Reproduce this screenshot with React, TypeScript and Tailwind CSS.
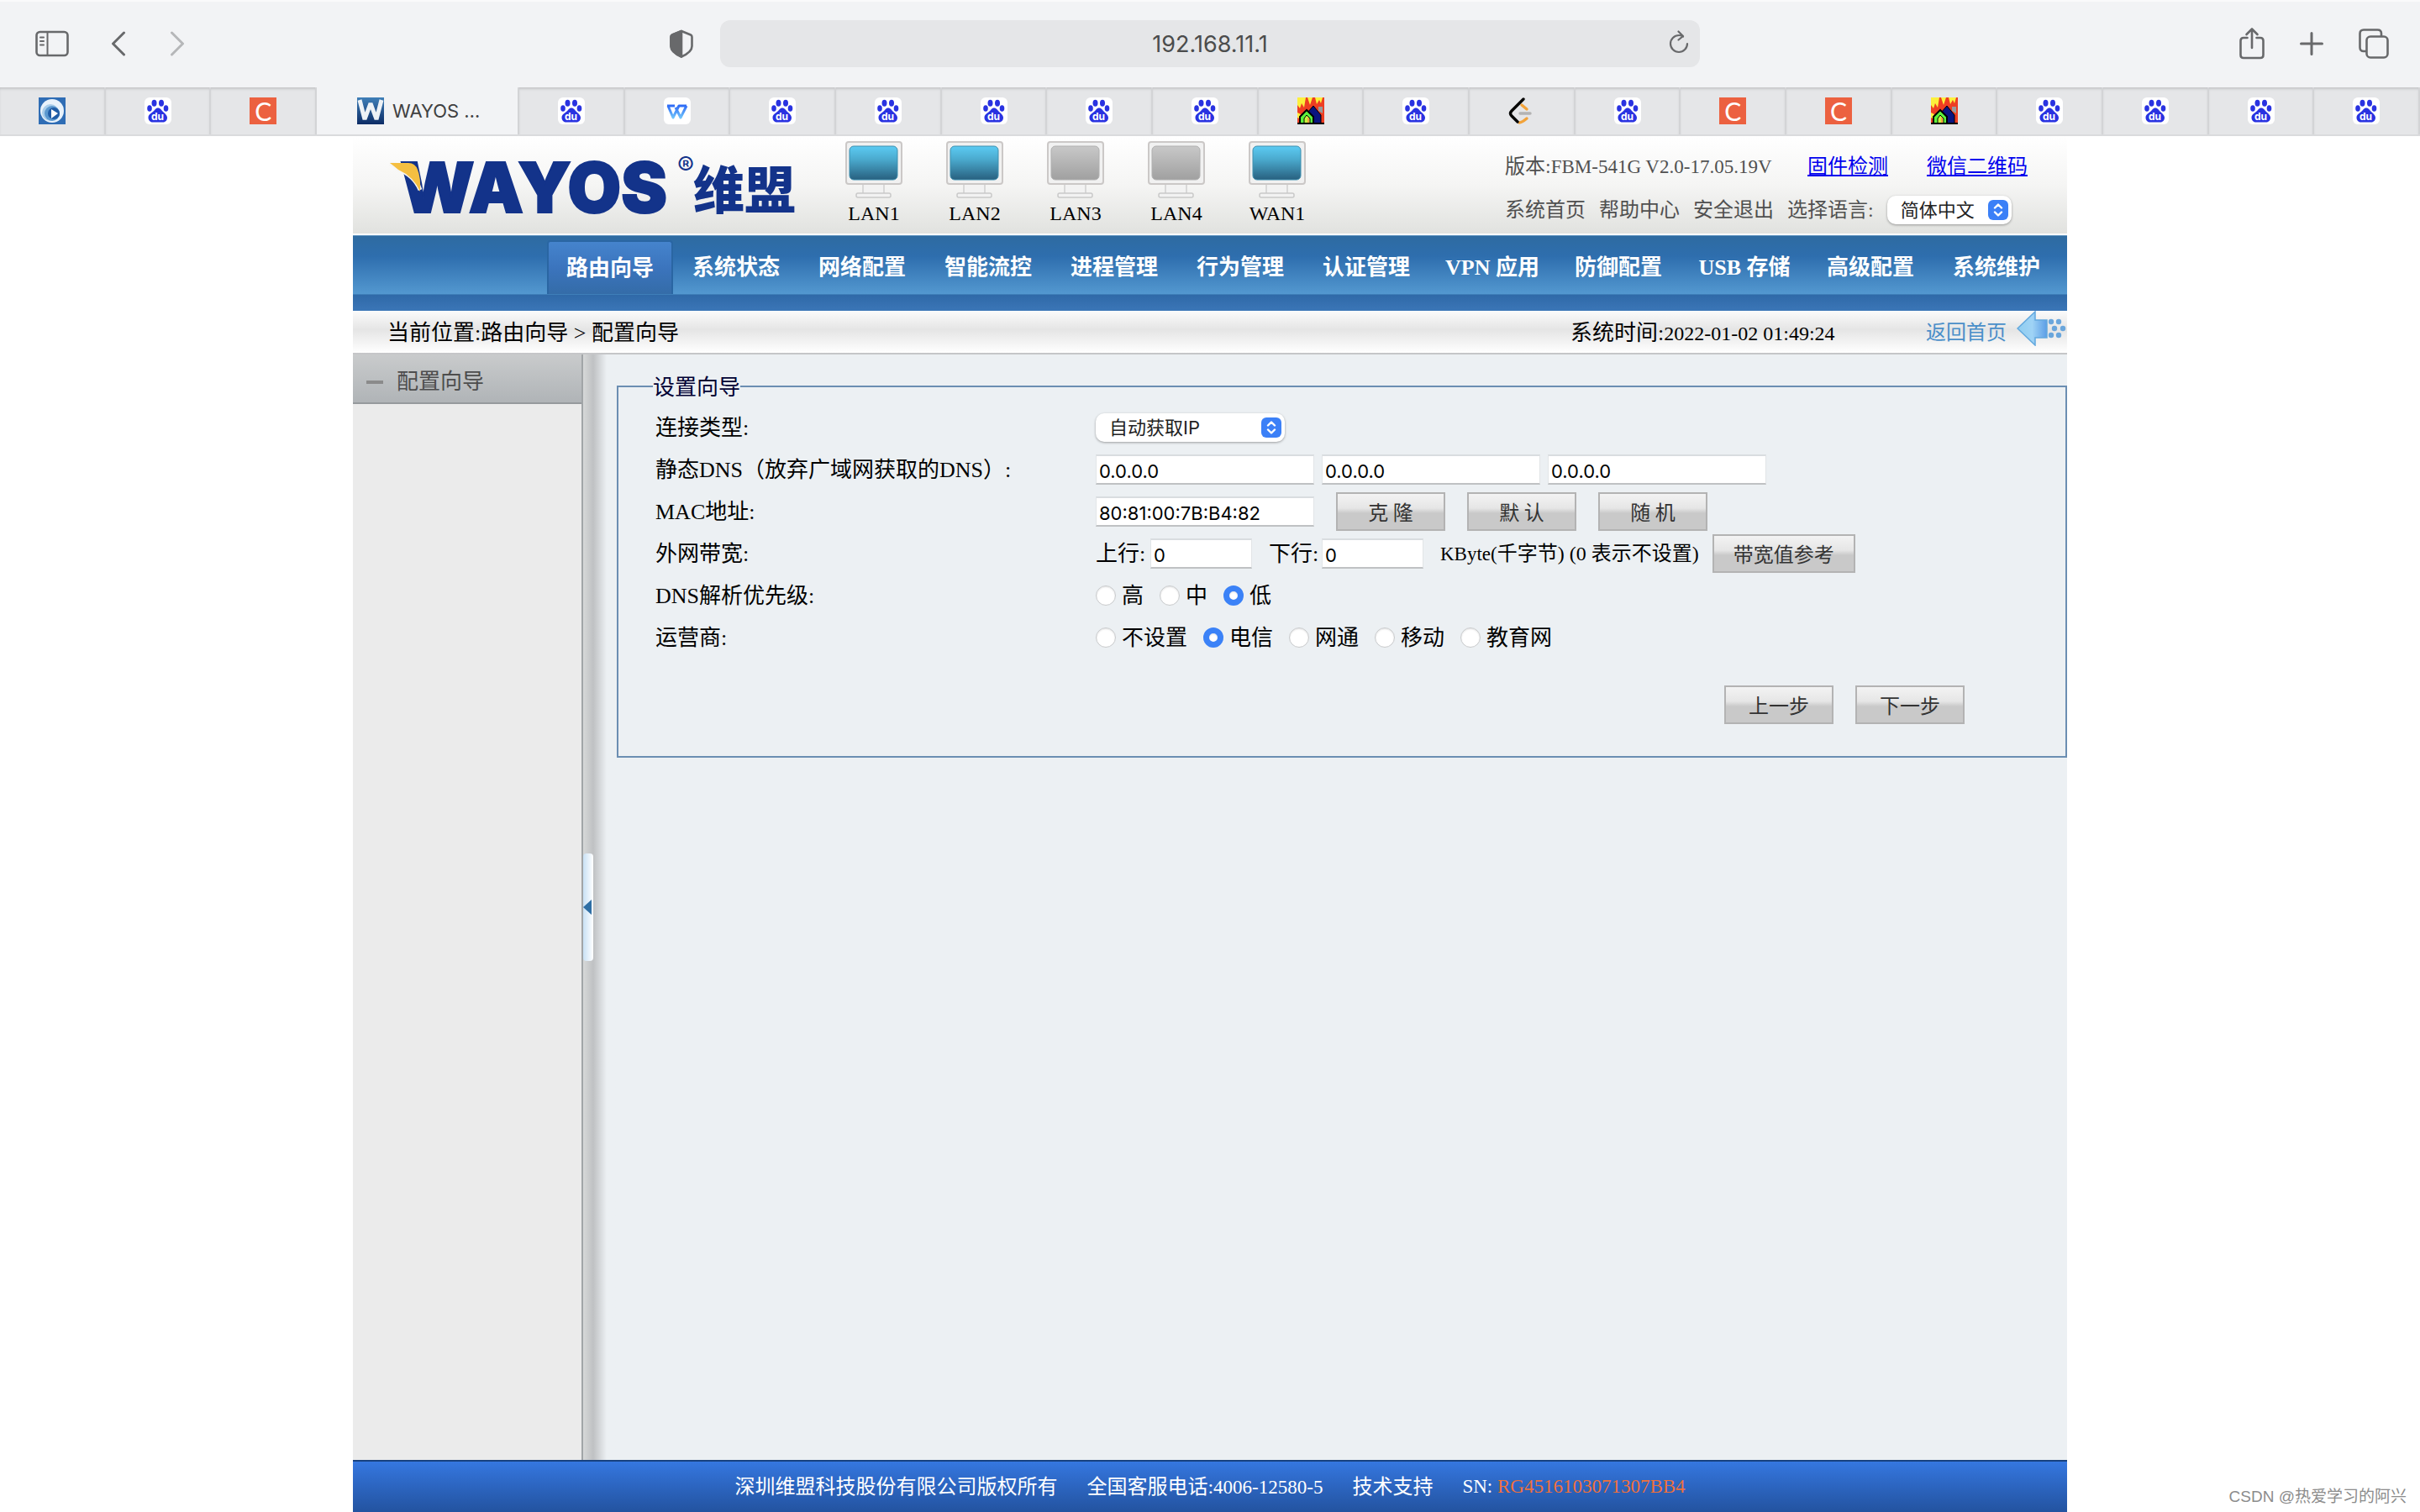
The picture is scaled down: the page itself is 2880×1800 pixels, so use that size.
import React from 'react';

type FaviconKind = 'play' | 'baidu' | 'csdn' | 'wayos' | 'wps' | 'house' | 'leetcode';

const tabsBefore: FaviconKind[] = ['play', 'baidu', 'csdn'];
const tabsAfter: FaviconKind[] = [
    'baidu', 'wps', 'baidu', 'baidu', 'baidu', 'baidu', 'baidu', 'house', 'baidu',
    'leetcode', 'baidu', 'csdn', 'csdn', 'house', 'baidu', 'baidu', 'baidu', 'baidu',
];

const ports = [
    { name: 'LAN1', up: true },
    { name: 'LAN2', up: true },
    { name: 'LAN3', up: false },
    { name: 'LAN4', up: false },
    { name: 'WAN1', up: true },
];

const menu = [
    '路由向导', '系统状态', '网络配置', '智能流控', '进程管理', '行为管理',
    '认证管理', 'VPN 应用', '防御配置', 'USB 存储', '高级配置', '系统维护',
];

const Favicon: React.FC<{ kind: FaviconKind }> = ({ kind }) => {
    switch (kind) {
        case 'baidu':
            return (
                <svg viewBox="0 0 32 32" className="size-8 shrink-0" fill="#2932e1">
                    <rect width="32" height="32" rx="6" fill="#fff" />
                    <ellipse cx="11.500" cy="6.700" rx="3" ry="4" />
                    <ellipse cx="20" cy="6.700" rx="3" ry="4" />
                    <ellipse cx="6" cy="13" rx="2.800" ry="3.800" />
                    <ellipse cx="25.500" cy="13" rx="2.800" ry="3.800" />
                    <path d="M16 12.500c3 0 4 2.500 6 4.500s5 4 5 7-2 5.500-5 5.500H10c-3 0-5.500-2-5.500-5.500s3-5 5.500-7 3-4.500 6-4.500z" />
                    <text x="15.500" y="27" fontFamily="Inter, sans-serif" fontWeight="700" fontSize="12" textAnchor="middle" fill="#fff">
                        du
                    </text>
                </svg>
            );
        case 'csdn':
            return (
                <span className="flex size-8 shrink-0 items-center justify-center bg-[#ec6140] font-['Lato',sans-serif] text-[30px] leading-8 text-white">
                    C
                </span>
            );
        case 'play':
            return (
                <svg viewBox="0 0 32 32" className="size-8 shrink-0">
                    <rect width="32" height="32" fill="#2f6db5" />
                    <circle cx="16" cy="16" r="14" fill="#e8f2fb" />
                    <circle cx="14" cy="18" r="10" fill="#a9cdea" />
                    <circle cx="16" cy="19" r="9" fill="#5b98cf" />
                    <circle cx="18" cy="19" r="7" fill="#1f5ca6" />
                    <path d="M15 14l8 5-8 6z" fill="#fff" />
                </svg>
            );
        case 'wayos':
            return (
                <svg viewBox="0 0 32 32" className="size-8 shrink-0">
                    <defs>
                        <linearGradient id="wfav" x1="0" y1="0" x2="0" y2="1">
                            <stop offset="0" stopColor="#3f7fb8" />
                            <stop offset="1" stopColor="#0d2c66" />
                        </linearGradient>
                    </defs>
                    <rect width="32" height="32" fill="url(#wfav)" />
                    <path d="M3 3l6 23 7-19 7 19 6-23" fill="none" stroke="#eef2f6" strokeWidth="5" strokeLinejoin="bevel" />
                </svg>
            );
        case 'wps':
            return (
                <svg viewBox="0 0 32 32" className="size-8 shrink-0">
                    <defs>
                        <linearGradient id="wps" x1="0" y1="0" x2="0" y2="1">
                            <stop offset="0" stopColor="#2f6cf6" />
                            <stop offset="1" stopColor="#6fc3fb" />
                        </linearGradient>
                    </defs>
                    <rect width="32" height="32" rx="6" fill="#fff" />
                    <path d="M4 10h9M5 10l6 14 7-14h9M14 12l6 12 7-14" fill="none" stroke="url(#wps)" strokeWidth="3" strokeLinejoin="round" />
                </svg>
            );
        case 'house':
            return (
                <svg viewBox="0 0 32 32" className="size-8 shrink-0">
                    <rect width="32" height="32" fill="#ee3d22" />
                    <path d="M0 0h10l-2 12-3-5-2 6-3-4zM12 0h6l-3 9zM21 0h9l-2 7-2-4-3 5zM0 18l4 2-2 5-2-1z" fill="#fcf03c" />
                    <path d="M25 11h5v8l-5-3z" fill="#9a9a9a" />
                    <path d="M12 32V18l7-8 9 11v11z" fill="#0a1480" stroke="#000" strokeWidth="1" />
                    <path d="M3 32V23l8-8 8 8v9z" fill="#5df23c" stroke="#000" strokeWidth="2" />
                    <path d="M8 32v-7l3-4 4 4v7z" fill="#c6f53c" stroke="#000" strokeWidth="1" />
                    <path d="M12 24h2v8h-2z" fill="#f5a33c" />
                    <path d="M0 31h32" stroke="#000" strokeWidth="2" />
                </svg>
            );
        case 'leetcode':
            return (
                <svg viewBox="0 0 32 32" className="size-8 shrink-0" fill="none" strokeWidth="3.4" strokeLinecap="round">
                    <path d="M16 9l6 5M13 30q3 0 9-5" stroke="#f2a33a" />
                    <path d="M14 19h12" stroke="#b3b3b3" />
                    <path d="M18 2L4 16q-3 3 0 6l7 7" stroke="#070706" />
                </svg>
            );
    }
};

const Tab: React.FC<{ kind: FaviconKind }> = ({ kind }) => (
    <button
        type="button"
        aria-label={kind}
        className="flex h-full flex-1 items-center justify-center border-r-2 border-[#d3d4d6] bg-[#e5e6e8] shadow-[inset_0_3px_3px_-1px_#c4c5c7]"
    >
        <Favicon kind={kind} />
    </button>
);

const BrowserChrome: React.FC = () => (
    <div className="font-['Inter',sans-serif] text-[#68696b]">
        <div className="grid h-[104px] grid-cols-[1fr_1166px_1fr] items-center bg-[#f2f3f5] shadow-[inset_0_2px_0_#fafafb]">
            <div className="flex items-center pr-8 pl-[42px]">
                <button type="button" aria-label="Sidebar">
                    <svg viewBox="0 0 40 32" className="h-8 w-10" fill="none" stroke="currentColor" strokeWidth="2.6" strokeLinecap="round">
                        <rect x="1.5" y="2" width="37" height="28" rx="4" />
                        <path d="M14.5 2v28M6 8.500h4M6 13h4M6 17.500h4" strokeWidth="2" />
                    </svg>
                </button>
                <button type="button" aria-label="Back" className="ml-[50px]">
                    <svg viewBox="0 0 18 30" className="h-[30px] w-[18px]" fill="none" stroke="currentColor" strokeWidth="3" strokeLinecap="round" strokeLinejoin="round">
                        <path d="M15.500 2L2.500 15l13 13" />
                    </svg>
                </button>
                <button type="button" aria-label="Forward" className="ml-[52px] text-[#b6b7b9]">
                    <svg viewBox="0 0 18 30" className="h-[30px] w-[18px]" fill="none" stroke="currentColor" strokeWidth="3" strokeLinecap="round" strokeLinejoin="round">
                        <path d="M2.500 2l13 13-13 13" />
                    </svg>
                </button>
                <button type="button" aria-label="Privacy report" className="ml-auto">
                    <svg viewBox="0 0 28 34" className="h-[34px] w-7" fill="none" stroke="currentColor" strokeWidth="2.600" strokeLinejoin="round">
                        <path d="M14 2l11 4.500q1.500.7 1.500 2.500v11q0 7-12.500 12.500Q1.500 27 1.500 20V9q0-1.800 1.500-2.500z" />
                        <path d="M14 2L3 6.500Q1.500 7.200 1.500 9v11q0 7 12.500 12.500z" fill="currentColor" />
                    </svg>
                </button>
            </div>
            <div className="relative h-14">
                <input
                    aria-label="Address"
                    defaultValue="192.168.11.1"
                    className="h-full w-full rounded-xl bg-[#e5e6e8] text-center text-[27px] text-[#4b4c4c] outline-none"
                />
                <button type="button" aria-label="Reload" className="absolute top-3 right-3">
                    <svg viewBox="0 0 26 30" className="h-[30px] w-[26px]" fill="none" stroke="currentColor" strokeWidth="2.200" strokeLinecap="round" strokeLinejoin="round">
                        <path d="M18 7.500q-2-1.500-5-1.500a10 10 0 1 0 10 10M12.500 1.500l5.500 5.500-5.500 4.500" />
                    </svg>
                </button>
            </div>
            <div className="flex items-center justify-end gap-[42px] pr-[37px]">
                <button type="button" aria-label="Share">
                    <svg viewBox="0 0 30 40" className="h-10 w-[30px]" fill="none" stroke="currentColor" strokeWidth="2.600" strokeLinecap="round" strokeLinejoin="round">
                        <path d="M9.500 13H5q-3.500 0-3.500 3.500v17Q1.500 37 5 37h20q3.500 0 3.500-3.500v-17Q28.500 13 25 13h-4.500M15 25V2.500M8.500 9L15 2.500 21.500 9" />
                    </svg>
                </button>
                <button type="button" aria-label="New tab">
                    <svg viewBox="0 0 28 28" className="size-7" stroke="currentColor" strokeWidth="3" strokeLinecap="round">
                        <path d="M14 1.500v25M1.500 14h25" />
                    </svg>
                </button>
                <button type="button" aria-label="Tab overview">
                    <svg viewBox="0 0 36 36" className="size-9" fill="none" stroke="currentColor" strokeWidth="2.600" strokeLinejoin="round">
                        <rect x="9.500" y="9.500" width="25" height="25" rx="4.500" />
                        <path d="M9 27H6q-4.500 0-4.500-4.500V6Q1.500 1.500 6 1.500h16.500Q27 1.500 27 6v3" />
                    </svg>
                </button>
            </div>
        </div>
        <div className="flex h-[58px] border-b-2 border-[#dadbdd] bg-[#f2f3f5]">
            {tabsBefore.map((kind, i) => (
                <Tab key={i} kind={kind} />
            ))}
            <button type="button" className="flex w-[241px] items-center gap-[10px] border-r-2 border-[#d3d4d6] pl-12 text-[22px] text-[#3f4041]">
                <Favicon kind="wayos" />
                WAYOS …
            </button>
            {tabsAfter.map((kind, i) => (
                <Tab key={i} kind={kind} />
            ))}
        </div>
    </div>
);

const Logo: React.FC = () => (
    <svg viewBox="0 0 486 116" className="h-[116px] w-[486px]" role="img" aria-label="WAYOS 维盟" fill="#13338a">
        <text x="14" y="91" fontFamily="Inter, sans-serif" fontWeight="900" fontSize="82" stroke="#13338a" strokeWidth="2">
            WAYOS
        </text>
        <text x="344" y="46" fontFamily="Inter, sans-serif" fontSize="30">
            ®
        </text>
        <text x="363" y="87" fontFamily="'Noto Sans CJK SC', sans-serif" fontWeight="900" fontSize="61">
            维盟
        </text>
        <path d="M2 33q25 1 36 31Q30 46 12 40q-4-5-10-7z" fill="#f6f6f5" stroke="#f6f6f5" strokeWidth="5" />
        <path d="M2 32h22q8 0 11 8 4 10 3 26Q30 48 12 40 6 35 2 32z" fill="#f5bf41" />
    </svg>
);

const Monitor: React.FC<{ up: boolean }> = ({ up }) => (
    <svg viewBox="0 0 68 68" className="size-[68px]">
        <defs>
            <linearGradient id="screenUp" x1="0" y1="0" x2="0" y2="1">
                <stop offset="0" stopColor="#5ccbf3" />
                <stop offset="0.400" stopColor="#4aa9cd" />
                <stop offset="1" stopColor="#28607f" />
            </linearGradient>
            <linearGradient id="screenDown" x1="0" y1="0" x2="0" y2="1">
                <stop offset="0" stopColor="#c8c8c8" />
                <stop offset="1" stopColor="#a0a0a0" />
            </linearGradient>
        </defs>
        <rect x="21" y="50" width="25" height="13" fill="#f2f2f2" stroke="#cfcfcf" strokeWidth="1.500" />
        <rect x="13" y="62" width="41" height="5" rx="2" fill="#f2f2f2" stroke="#c9c9c9" strokeWidth="1.500" />
        <rect x="1" y="1" width="66" height="50" rx="3" fill="#f1f1f1" stroke="#cbc8c7" strokeWidth="2" />
        <rect x="5" y="6" width="57" height="40" rx="5" fill={up ? 'url(#screenUp)' : 'url(#screenDown)'} stroke={up ? '#3f8fae' : '#b0b0b0'} strokeWidth="1" />
    </svg>
);

const PopupSelect: React.FC<{ id: string; options: string[]; className: string }> = ({ id, options, className }) => (
    <span className={`relative inline-flex h-[34px] items-center ${className}`}>
        <select
            id={id}
            className="h-full w-full appearance-none rounded-[10px] bg-white pl-4 font-['Inter','Noto_Sans_CJK_SC',sans-serif] text-[22px] leading-8 text-[#222] shadow-[0_1px_3px_rgba(0,0,0,0.35)] outline-none"
        >
            {options.map((o) => (
                <option key={o}>{o}</option>
            ))}
        </select>
        <svg viewBox="0 0 24 24" className="pointer-events-none absolute right-1 size-6">
            <rect width="24" height="24" rx="6" fill="#3b80f7" />
            <path d="M8 9.500l4-4 4 4M8 14.500l4 4 4-4" fill="none" stroke="#fff" strokeWidth="2.400" strokeLinecap="round" strokeLinejoin="round" />
        </svg>
    </span>
);

const Header: React.FC = () => (
    <header className="flex h-[116px] bg-linear-to-b from-white via-[#f5f5f4] to-[#e1e2df] pl-[42px] text-2xl">
        <Logo />
        <div className="ml-8 flex pt-[6px]">
            {ports.map((p) => (
                <div key={p.name} className="flex w-[120px] flex-col items-center gap-1">
                    <Monitor up={p.up} />
                    <span className="leading-7">{p.name}</span>
                </div>
            ))}
        </div>
        <div className="ml-auto w-[669px] pt-[10px] text-[#505050]">
            <div className="flex h-[52px] items-center">
                <span className="w-[360px]">
                    版本:<span className="text-[23px]">FBM-541G V2.0-17.05.19V</span>
                </span>
                <a href="#firmware" className="text-[#0000ee] underline">固件检测</a>
                <a href="#wechat" className="ml-[46px] text-[#0000ee] underline">微信二维码</a>
            </div>
            <div className="flex h-[52px] items-center gap-4">
                <a href="#home">系统首页</a>
                <a href="#help">帮助中心</a>
                <a href="#logout">安全退出</a>
                <label htmlFor="lang">选择语言:</label>
                <PopupSelect id="lang" options={['简体中文']} className="w-[148px]" />
            </div>
        </div>
    </header>
);

const Nav: React.FC = () => (
    <nav className="border-t-2 border-white">
        <div className="flex h-[70px] items-end justify-end border-t border-[#5b92bf] bg-linear-to-b from-[#2e6ba1] via-[#2e6eae] via-35% to-[#5398d0] pr-[9px]">
            {menu.map((item, i) => (
                <a
                    key={item}
                    href={`#menu-${i}`}
                    className={
                        i === 0
                            ? 'flex h-16 w-[150px] items-center justify-center rounded-t-sm border-2 border-b-0 border-[#2a66a3] bg-linear-to-b from-[#4584cd] via-[#3b74bd] via-50% to-[#346ca8] text-[26px] font-bold text-white'
                            : 'flex h-16 w-[150px] items-center justify-center text-[26px] font-bold text-white'
                    }
                >
                    {item}
                </a>
            ))}
        </div>
        <div className="h-5 border-t border-[#3f7fb9] bg-linear-to-b from-[#2f69a8] to-[#3b76b7]" />
    </nav>
);

const Breadcrumb: React.FC = () => (
    <div className="flex h-[52px] border-b-2 border-[#c5c6c8] bg-linear-to-b from-[#fbfbfb] via-[#e5e5e5] via-45% to-white pl-[41px] text-[26px] leading-[54px] text-black">
        <span>当前位置:路由向导 &gt; 配置向导</span>
        <span className="ml-auto w-[423px]">
            系统时间:<span className="text-2xl leading-none">2022-01-02 01:49:24</span>
        </span>
        <a href="#home" className="flex gap-3 text-2xl leading-[52px] text-[#4a8fc9]">
            返回首页
            <svg viewBox="0 0 60 42" className="h-[42px] w-[60px]">
                <defs>
                    <linearGradient id="back" x1="0" y1="0" x2="1" y2="0">
                        <stop offset="0" stopColor="#8fcdf0" />
                        <stop offset="0.500" stopColor="#9fd3f5" />
                        <stop offset="1" stopColor="#5b9de6" />
                    </linearGradient>
                </defs>
                <path d="M1 21L22 1v10h14v21H22v9z" fill="url(#back)" stroke="#62a8de" strokeWidth="1.500" />
                <g fill="#6aa6dc">
                    <circle cx="41" cy="13" r="3.200" />
                    <circle cx="50" cy="13" r="3.200" />
                    <circle cx="45" cy="21" r="3.200" />
                    <circle cx="55" cy="21" r="3.200" />
                    <circle cx="41" cy="29" r="3.200" />
                    <circle cx="50" cy="29" r="3.200" />
                </g>
            </svg>
        </a>
    </div>
);

const Button: React.FC<{ children: React.ReactNode; wide?: boolean }> = ({ children, wide }) => (
    <button
        type="button"
        className={`h-[46px] border-2 border-[#b3b3b3] bg-linear-to-b from-[#f3f3f3] from-0% via-[#e6e6e6] via-40% to-[#c9c9c9] to-55% font-['Noto_Sans_CJK_SC',sans-serif] text-2xl leading-8 text-[#333] ${wide ? 'w-[170px]' : 'w-[130px]'}`}
    >
        {children}
    </button>
);

const TextBox: React.FC<{ id: string; value: string; label?: string; small?: boolean }> = ({ id, value, label, small }) => (
    <input
        id={id}
        aria-label={label}
        defaultValue={value}
        className={`h-9 border border-t-2 border-b-2 border-[#e2e5e7] border-t-[#d9dde0] border-b-[#bfc1c3] bg-white pt-1 pl-[3px] font-['Inter',sans-serif] text-[22px] text-black outline-none ${small ? 'w-[121px]' : 'w-[260px]'}`}
    />
);

const RadioGroup: React.FC<{ name: string; options: string[]; selected: string }> = ({ name, options, selected }) => (
    <div className="flex items-center gap-[19px]" role="radiogroup" aria-labelledby={name}>
        {options.map((o) => (
            <label key={o} className="flex items-center gap-[7px]">
                <input
                    type="radio"
                    name={name}
                    defaultChecked={o === selected}
                    className="size-6 appearance-none rounded-full border border-[#c8cacc] bg-white shadow-[inset_0_1px_2px_rgba(0,0,0,0.12)] checked:border-[7px] checked:border-[#3b82f7]"
                />
                {o}
            </label>
        ))}
    </div>
);

const Row: React.FC<{ label: string; htmlFor?: string; id?: string; children: React.ReactNode }> = ({ label, htmlFor, id, children }) => (
    <div className="grid h-[50px] grid-cols-[524px_1fr] items-center">
        {htmlFor ? <label htmlFor={htmlFor}>{label}</label> : <span id={id}>{label}</span>}
        <div className="flex items-center">{children}</div>
    </div>
);

const Wizard: React.FC = () => (
    <form className="flex-1 bg-[#ecf0f3] pt-[18px]">
        <fieldset className="border-2 border-[#6b8eb2] pr-[120px] pb-[38px] pl-[41px] text-[26px] text-black">
            <legend className="pt-1 leading-9 text-[#000033]">设置向导</legend>
            <div className="pt-1 pl-[3px]">
                <Row label="连接类型:" htmlFor="conn">
                    <PopupSelect id="conn" options={['自动获取IP']} className="w-[225px]" />
                </Row>
                <Row label="静态DNS（放弃广域网获取的DNS）:" htmlFor="dns1">
                    <div className="flex gap-[9px]">
                        <TextBox id="dns1" value="0.0.0.0" />
                        <TextBox id="dns2" value="0.0.0.0" label="DNS 2" />
                        <TextBox id="dns3" value="0.0.0.0" label="DNS 3" />
                    </div>
                </Row>
                <Row label="MAC地址:" htmlFor="mac">
                    <div className="flex items-center gap-[26px]">
                        <TextBox id="mac" value="80:81:00:7B:B4:82" />
                        <Button>克 隆</Button>
                        <Button>默 认</Button>
                        <Button>随 机</Button>
                    </div>
                </Row>
                <Row label="外网带宽:">
                    <label htmlFor="up" className="w-[65px]">上行:</label>
                    <TextBox id="up" value="0" small />
                    <label htmlFor="down" className="ml-5 w-[63px]">下行:</label>
                    <TextBox id="down" value="0" small />
                    <span className="mr-4 ml-5 text-2xl">
                        <span className="text-[23px]">KByte(</span>千字节) (0 表示不设置)
                    </span>
                    <Button wide>带宽值参考</Button>
                </Row>
                <Row label="DNS解析优先级:" id="priority">
                    <RadioGroup name="priority" options={['高', '中', '低']} selected="低" />
                </Row>
                <Row label="运营商:" id="isp">
                    <RadioGroup name="isp" options={['不设置', '电信', '网通', '移动', '教育网']} selected="电信" />
                </Row>
            </div>
            <div className="mt-8 flex justify-end gap-[26px]">
                <Button>上一步</Button>
                <Button>下一步</Button>
            </div>
        </fieldset>
    </form>
);

const Sidebar: React.FC = () => (
    <>
        <aside className="w-[274px] border-r-2 border-[#a1a5a7] bg-[#ebebeb]">
            <a href="#wizard" className="flex h-[59px] items-center gap-4 border-b-2 border-[#969a9d] bg-linear-to-b from-[#c9cbcc] to-[#b0b4b7] pt-2 pl-4 text-[26px] leading-9 text-[#4d4d4d]">
                <span className="h-1 w-5 bg-[#8b8b8b]" />
                配置向导
            </a>
        </aside>
        <div className="flex w-10 items-center bg-linear-to-r from-[#d6d8d8] via-[#bfc1c3] via-30% to-[#ecf0f3] to-70%">
            <button
                type="button"
                aria-label="收起"
                className="flex h-32 w-3 items-center rounded-sm bg-linear-to-r from-[#c9e1f5] to-white"
            >
                <svg viewBox="0 0 12 18" className="h-[18px] w-3">
                    <path d="M0 9L10 0v18z" fill="#2f6fa5" />
                </svg>
            </button>
        </div>
    </>
);

const Footer: React.FC = () => (
    <footer className="flex h-[62px] items-center justify-center gap-[35px] border-t-2 border-[#17417f] bg-linear-to-b from-[#3577e0] to-[#2353a0] text-2xl text-white">
        <span>深圳维盟科技股份有限公司版权所有</span>
        <span>
            全国客服电话:<span className="text-[23px]">4006-12580-5</span>
        </span>
        <a href="#support">技术支持</a>
        <span className="text-[23px]">
            SN: <span className="text-[#f0703c]">RG4516103071307BB4</span>
        </span>
    </footer>
);

const App: React.FC = () => {
    return (
        <div className="relative flex min-h-screen flex-col bg-white font-['Liberation_Serif','Noto_Sans_CJK_SC',serif]">
            <BrowserChrome />
            <div className="mx-auto flex w-full max-w-[2040px] flex-1 flex-col">
                <Header />
                <Nav />
                <Breadcrumb />
                <main className="flex flex-1">
                    <Sidebar />
                    <Wizard />
                </main>
                <Footer />
            </div>
            <p className="absolute right-4 bottom-1 font-['Liberation_Sans','Noto_Sans_CJK_SC',sans-serif] text-[19px] text-[#8c8c8c]">
                CSDN @热爱学习的阿兴
            </p>
        </div>
    );
};

export default App;
